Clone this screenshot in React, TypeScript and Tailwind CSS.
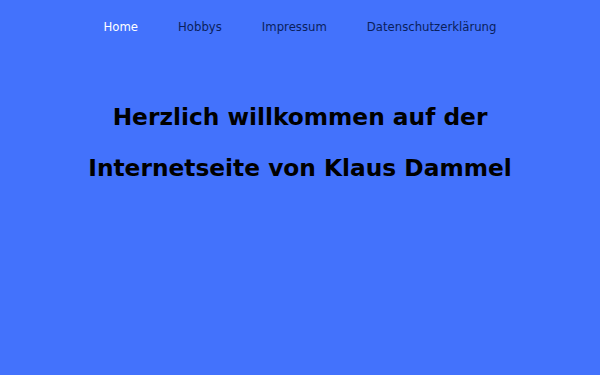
export default function App() {
  const links = ['Home', 'Hobbys', 'Impressum', 'Datenschutzerklärung'];
  return (
    <div className="min-h-[375px] bg-[#4372fc] font-['DejaVu_Sans',sans-serif]">
      <nav className="flex justify-center gap-10 pt-[20px] text-[11.7px] leading-[15px]">
        {links.map((l, i) => (
          <a key={l} href="#" className={i === 0 ? 'text-white' : 'text-[#0a1f5c]'}>
            {l}
          </a>
        ))}
      </nav>
      <main className="mt-[56px] text-center font-bold text-[23.3px] text-black">
        <h1 className="leading-[51px]">Herzlich willkommen auf der</h1>
        <h1 className="leading-[51px]">Internetseite von Klaus Dammel</h1>
      </main>
    </div>
  );
}
